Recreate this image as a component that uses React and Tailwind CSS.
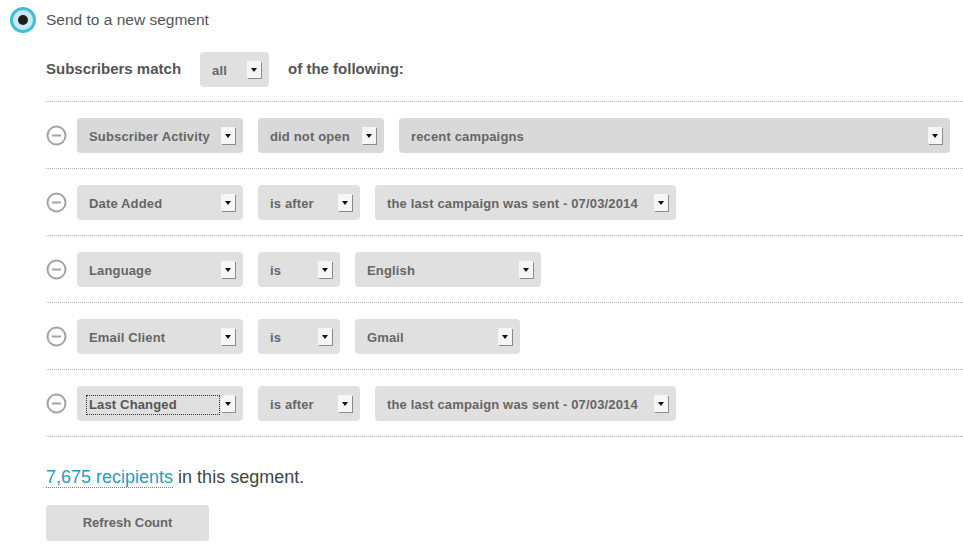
import { useState } from "react";

const rows = [
  {
    field: "Subscriber Activity",
    op: "did not open",
    opW: "w-[126px]",
    value: "recent campaigns",
    valueW: "flex-1 mr-[13px]",
    dark: true,
  },
  {
    field: "Date Added",
    op: "is after",
    opW: "w-[102px]",
    value: "the last campaign was sent - 07/03/2014",
    valueW: "w-[301px]",
  },
  {
    field: "Language",
    op: "is",
    opW: "w-[82px]",
    value: "English",
    valueW: "w-[186px]",
  },
  {
    field: "Email Client",
    op: "is",
    opW: "w-[82px]",
    value: "Gmail",
    valueW: "w-[165px]",
  },
  {
    field: "Last Changed",
    op: "is after",
    opW: "w-[102px]",
    value: "the last campaign was sent - 07/03/2014",
    valueW: "w-[301px]",
    focused: true,
  },
];

function Arrow() {
  return (
    <span className="flex items-center justify-center w-[14px] h-[17px] bg-[#f6f6f6] shadow-[1px_1px_0_#8a8a8a] shrink-0">
      <span className="w-0 h-0 border-l-[3px] border-r-[3px] border-t-[4px] border-l-transparent border-r-transparent border-t-[#111]" />
    </span>
  );
}

function Select({ label, className = "", dark, focused }) {
  return (
    <div
      className={`flex items-center justify-between h-[35px] rounded-[4px] pl-[12px] pr-[8px] ${
        dark ? "bg-[#d9d9d9]" : "bg-[#e0e0e0]"
      } ${className}`}
    >
      {focused ? (
        <span className="flex-1 mr-[2px] -ml-[2px] pl-[2px] mt-[2px] outline outline-1 outline-dotted outline-[#333] text-[13px] tracking-[0.15px] font-bold text-[#555] leading-[18px]">
          {label}
        </span>
      ) : (
        <span className="pt-[2px] text-[13px] tracking-[0.15px] font-bold text-[#666] whitespace-nowrap">
          {label}
        </span>
      )}
      <Arrow />
    </div>
  );
}

function Minus() {
  return (
    <svg width="21" height="21" viewBox="0 0 21 21" className="shrink-0">
      <circle cx="10.5" cy="10.5" r="9" fill="none" stroke="#a3a3a3" strokeWidth="2" />
      <line x1="6" y1="10.5" x2="15" y2="10.5" stroke="#a3a3a3" strokeWidth="2" />
    </svg>
  );
}

export default function App() {
  const [count] = useState("7,675");

  return (
    <div
      className="min-h-screen bg-white pt-[7px]"
      style={{ fontFamily: '"Liberation Sans", Arial, sans-serif' }}
    >
      <div className="flex items-center pl-[10px] h-[26px]">
        <span className="flex items-center justify-center w-[26px] h-[26px] rounded-full border-[3px] border-[#45bdd8] bg-[#c9e9f3]">
          <span className="w-[10px] h-[10px] rounded-full bg-[#1d1d1d]" />
        </span>
        <span className="ml-[10px] text-[15.5px] text-[#555]">Send to a new segment</span>
      </div>

      <div className="pl-[46px]">
        <div className="flex items-center mt-[19px] h-[35px]">
          <span className="text-[15px] font-bold text-[#555]">Subscribers match</span>
          <Select label="all" className="ml-[19px] w-[69px]" />
          <span className="ml-[19px] text-[15px] font-bold text-[#555]">of the following:</span>
        </div>

        <div className="mt-[14px] border-t border-dotted border-[#b5b5b5]">
          {rows.map((r) => (
            <div
              key={r.field}
              className="flex items-center pt-[16px] pb-[15px] border-b border-dotted border-[#b5b5b5]"
            >
              <Minus />
              <Select
                label={r.field}
                className="ml-[10px] w-[166px]"
                dark={r.dark}
                focused={r.focused}
              />
              <Select label={r.op} className={`ml-[15px] ${r.opW}`} dark={r.dark} />
              <Select label={r.value} className={`ml-[15px] ${r.valueW}`} dark={r.dark} />
            </div>
          ))}
        </div>

        <p className="mt-[29px] text-[18px] leading-[22px] text-[#444]">
          <span className="text-[#2a9ac1] border-b border-dotted border-[#2a9ac1]">
            {count} recipients
          </span>{" "}
          in this segment.
        </p>

        <button className="mt-[17px] w-[163px] h-[36px] rounded-[3px] bg-[#e0e0e0] text-[13px] font-bold text-[#666]">
          Refresh Count
        </button>
      </div>
    </div>
  );
}
